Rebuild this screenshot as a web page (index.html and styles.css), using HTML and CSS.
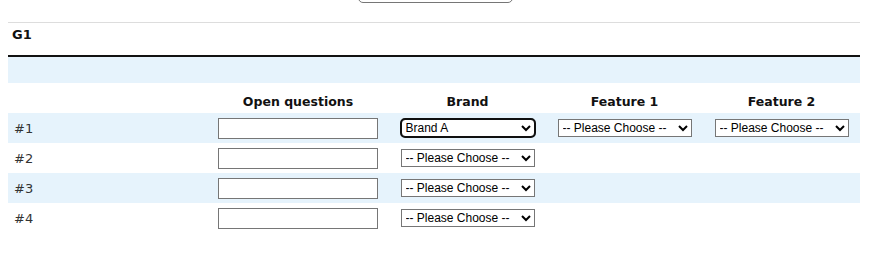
FILE: index.html
```html
<!DOCTYPE html>
<html lang="en">
<head>
  <meta charset="UTF-8">
  <meta name="viewport" content="width=device-width, initial-scale=1">
  <title>Survey G1</title>
  <link rel="stylesheet" href="styles.css">
</head>
<body>
  <!-- Previous page button, mostly scrolled out of view -->
  <div class="top-action">
    <button type="button" class="nav-button" aria-label="Back"></button>
  </div>

  <!-- Question group -->
  <div class="group">
    <h2 class="group-title">G1</h2>
    <div class="group-band"></div>

    <table class="matrix">
      <colgroup>
        <col class="col-label">
        <col class="col-open">
        <col class="col-choice">
        <col class="col-choice">
        <col class="col-choice">
      </colgroup>
      <thead>
        <tr>
          <th></th>
          <th>Open questions</th>
          <th>Brand</th>
          <th>Feature 1</th>
          <th>Feature 2</th>
        </tr>
      </thead>
      <tbody>
        <tr class="row-alt">
          <td class="row-label">#1</td>
          <td><input type="text" class="text-field"></td>
          <td>
            <select class="choice is-focused">
              <option>Brand A</option>
              <option>-- Please Choose --</option>
            </select>
          </td>
          <td>
            <select class="choice">
              <option>-- Please Choose --</option>
            </select>
          </td>
          <td>
            <select class="choice">
              <option>-- Please Choose --</option>
            </select>
          </td>
        </tr>
        <tr>
          <td class="row-label">#2</td>
          <td><input type="text" class="text-field"></td>
          <td>
            <select class="choice">
              <option>-- Please Choose --</option>
            </select>
          </td>
          <td></td>
          <td></td>
        </tr>
        <tr class="row-alt">
          <td class="row-label">#3</td>
          <td><input type="text" class="text-field"></td>
          <td>
            <select class="choice">
              <option>-- Please Choose --</option>
            </select>
          </td>
          <td></td>
          <td></td>
        </tr>
        <tr>
          <td class="row-label">#4</td>
          <td><input type="text" class="text-field"></td>
          <td>
            <select class="choice">
              <option>-- Please Choose --</option>
            </select>
          </td>
          <td></td>
          <td></td>
        </tr>
      </tbody>
    </table>
  </div>
</body>
</html>
```

FILE: styles.css
```css
/* Base page */
body {
  margin: 0 13px 0 8px;
  font-family: "DejaVu Sans", Verdana, sans-serif;
  font-size: 13px;
  color: #333;
  background: #fff;
}
/* Button left over from the previous section, only its bottom edge shows */
.top-action {
  height: 3px;
  overflow: hidden;
  display: flex;
  justify-content: center;
  align-items: flex-end;
  padding-left: 2px;
}
.nav-button {
  width: 155px;
  height: 30px;
  border: 1px solid #767676;
  border-radius: 5px;
  background: #fff;
}
/* Group container */
.group {
  margin-top: 19px;
  border-top: 1px solid #ddd;
}
.group-title {
  margin: 0;
  padding: 0 4px;
  height: 32px;
  line-height: 24px;
  font-size: 13px;
  font-weight: bold;
  color: #111;
  border-bottom: 2px solid #111;
}
/* Empty blue band under the title */
.group-band {
  height: 26px;
  background: #e6f3fc;
}
/* Question matrix */
.matrix {
  width: 100%;
  border-collapse: collapse;
  table-layout: fixed;
}
.col-label { width: 199px; }
.col-open { width: 182px; }
.col-choice { width: 157px; }
.matrix th {
  padding: 11px 4px 4px;
  line-height: 15px;
  font-size: 12.5px;
  font-weight: bold;
  color: #111;
  text-align: center;
}
.matrix td {
  height: 22px;
  padding: 4px 0;
  text-align: center;
  vertical-align: middle;
}
.matrix td.row-label {
  padding-left: 6px;
  text-align: left;
}
.row-alt {
  background: #e6f3fc;
}
/* Form controls */
.text-field {
  box-sizing: border-box;
  width: 160px;
  height: 21px;
  margin: 0;
  border: 1px solid #767676;
  background: #fff;
  vertical-align: middle;
}
.choice {
  box-sizing: border-box;
  width: 134px;
  height: 18px;
  margin: 0;
  font-family: "Liberation Sans", Arial, sans-serif;
  font-size: 12px;
  color: #000;
  border: 1px solid #767676;
  border-radius: 0;
  background: #fff;
  vertical-align: middle;
}
/* Keyboard focus ring on the active select */
.choice.is-focused {
  outline: 2px solid #101010;
  outline-offset: -1px;
  border-radius: 4px;
}
```
